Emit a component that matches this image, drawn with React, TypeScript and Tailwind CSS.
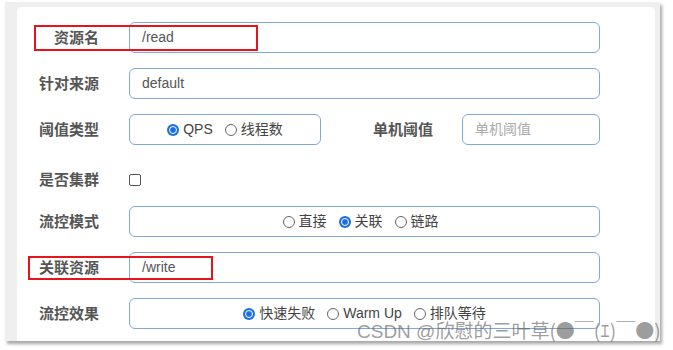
import React from 'react';

const font = { fontFamily: '"Liberation Sans", "Noto Sans CJK SC", sans-serif' };
const cjk = { fontFamily: '"Noto Sans CJK SC", "Liberation Sans", sans-serif' };

const Label: React.FC<{ text: string; w?: string }> = ({ text, w = 'w-[82px]' }) => (
  <div className={`${w} shrink-0 text-right text-[15px] font-bold text-[#555] leading-none`}>{text}</div>
);

const Radio: React.FC<{ checked?: boolean; label: string }> = ({ checked, label }) => (
  <span className="flex items-center gap-[4px] text-[14px] text-[#444]">
    {checked ? (
      <span className="w-[12px] h-[12px] rounded-full bg-[#1a6fe8] flex items-center justify-center">
        <span className="w-[8px] h-[8px] rounded-full border-[1.5px] border-white bg-[#1a6fe8]" />
      </span>
    ) : (
      <span className="w-[12px] h-[12px] rounded-full border border-[#666] bg-white" />
    )}
    {label}
  </span>
);

const Box: React.FC<{ children?: React.ReactNode; className?: string }> = ({ children, className = '' }) => (
  <div className={`h-[31px] border border-[#7fa9d6] rounded-[6px] flex items-center ${className}`}>{children}</div>
);

export default function App() {
  return (
    <div className="relative w-[673px] h-[350px] bg-white pl-[5px] pt-[2px]" style={font}>
      <div className="w-[655px] h-[339px] bg-[#efefef] shadow-[2px_3px_3px_rgba(0,0,0,0.35)] pl-[12px] pt-[5px] pr-[5px]">
        <div className="h-full bg-white rounded-t-[5px] pt-[15px] flex flex-col gap-[15px]">
          <div className="flex items-center h-[31px] gap-[30px]">
            <Label text="资源名" />
            <Box className="w-[471px] pl-[12px] text-[14px] text-[#555]">/read</Box>
          </div>
          <div className="flex items-center h-[31px] gap-[30px]">
            <Label text="针对来源" />
            <Box className="w-[471px] pl-[12px] text-[14px] text-[#555]">default</Box>
          </div>
          <div className="flex items-center h-[31px]">
            <Label text="阈值类型" />
            <Box className="ml-[30px] w-[192px] justify-center gap-[12px]">
              <Radio checked label="QPS" />
              <Radio label="线程数" />
            </Box>
            <Label text="单机阈值" w="w-[112px]" />
            <Box className="ml-[29px] w-[138px] pl-[12px] text-[14px] text-[#aaa]">单机阈值</Box>
          </div>
          <div className="flex items-center h-[31px] pt-[8px] gap-[30px]">
            <Label text="是否集群" />
            <span className="w-[12px] h-[12px] rounded-[2px] border border-[#555] bg-white" />
          </div>
          <div className="flex items-center h-[31px] gap-[30px]">
            <Label text="流控模式" />
            <Box className="w-[471px] justify-center gap-[12px] pr-[8px]">
              <Radio label="直接" />
              <Radio checked label="关联" />
              <Radio label="链路" />
            </Box>
          </div>
          <div className="flex items-center h-[31px] gap-[30px]">
            <Label text="关联资源" />
            <Box className="w-[471px] pl-[12px] text-[14px] text-[#555]">/write</Box>
          </div>
          <div className="flex items-center h-[31px] gap-[30px]">
            <Label text="流控效果" />
            <Box className="w-[471px] justify-center gap-[12px]">
              <Radio checked label="快速失败" />
              <Radio label="Warm Up" />
              <Radio label="排队等待" />
            </Box>
          </div>
        </div>
      </div>
      <div className="absolute left-[34px] top-[25px] w-[224px] h-[26px] border-2 border-[#e8141c]" />
      <div className="absolute left-[28px] top-[256px] w-[185px] h-[24px] border-2 border-[#e8141c]" />
      <div className="absolute left-[357px] top-[318px] text-[19px] leading-[24px] text-[rgba(90,90,90,0.6)] whitespace-nowrap">
        CSDN @欣慰的三叶草<span style={cjk}>(●￣(ｴ)￣●)</span>
      </div>
    </div>
  );
}
